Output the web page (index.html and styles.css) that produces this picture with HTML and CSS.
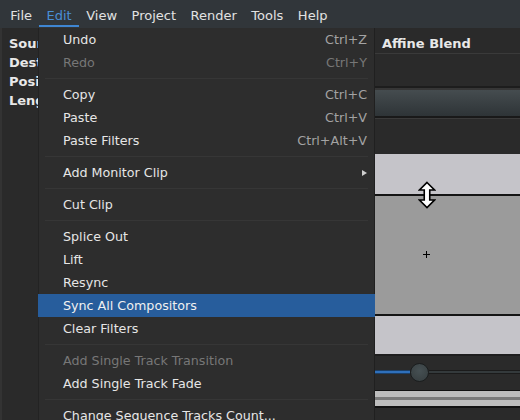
FILE: index.html
```html
<!DOCTYPE html>
<html>
<head>
<meta charset="utf-8">
<link rel="stylesheet" href="styles.css">
</head>
<body>
<div class="app">
  <div class="menubar">
    <span class="mb-item">File</span>
    <span class="mb-item active">Edit</span>
    <span class="mb-item">View</span>
    <span class="mb-item">Project</span>
    <span class="mb-item">Render</span>
    <span class="mb-item">Tools</span>
    <span class="mb-item">Help</span>
  </div>
  <div class="workspace">
    <div class="info">
      <div class="label">Source:</div>
      <div class="label">Destination:</div>
      <div class="label">Position:</div>
      <div class="label">Length:</div>
    </div>
    <div class="editor">
      <div class="title">Affine Blend</div>
      <div class="blank1"></div>
      <div class="toolbar"></div>
      <div class="sepline"></div>
      <div class="blank2"></div>
      <div class="band-light"></div>
      <div class="band-mid"></div>
      <div class="band-light2"></div>
      <div class="slider-row">
        <div class="fill"></div>
        <div class="thumb"></div>
        <div class="track"></div>
      </div>
      <div class="strip"></div>
      <div class="rest"></div>
      <svg class="cursor-resize" width="18" height="28" viewBox="0 0 18 28">
        <polygon points="9,1.5 16.5,9 11.75,9 11.75,19 16.5,19 9,26.5 1.5,19 6.25,19 6.25,9 1.5,9" fill="#ffffff" stroke="#000000" stroke-width="1.6" stroke-linejoin="miter"/>
      </svg>
      <svg class="cursor-cross" width="9" height="9" viewBox="0 0 9 9">
        <path d="M4.5 1V8M1 4.5H8" stroke="#000" stroke-width="1"/>
      </svg>
    </div>
  </div>
  <div class="menu">
    <div class="mi"><span>Undo</span><span class="sc">Ctrl+Z</span></div>
    <div class="mi disabled"><span>Redo</span><span class="sc">Ctrl+Y</span></div>
    <div class="sep"></div>
    <div class="mi"><span>Copy</span><span class="sc">Ctrl+C</span></div>
    <div class="mi"><span>Paste</span><span class="sc">Ctrl+V</span></div>
    <div class="mi"><span>Paste Filters</span><span class="sc">Ctrl+Alt+V</span></div>
    <div class="sep"></div>
    <div class="mi"><span>Add Monitor Clip</span><span class="arrow"></span></div>
    <div class="sep"></div>
    <div class="mi"><span>Cut Clip</span></div>
    <div class="sep"></div>
    <div class="mi"><span>Splice Out</span></div>
    <div class="mi"><span>Lift</span></div>
    <div class="mi"><span>Resync</span></div>
    <div class="mi selected"><span>Sync All Compositors</span></div>
    <div class="mi"><span>Clear Filters</span></div>
    <div class="sep"></div>
    <div class="mi disabled"><span>Add Single Track Transition</span></div>
    <div class="mi"><span>Add Single Track Fade</span></div>
    <div class="sep"></div>
    <div class="mi"><span>Change Sequence Tracks Count...</span></div>
  </div>
</div>
</body>
</html>
```
FILE: styles.css
```css
html, body {
  margin: 0;
  padding: 0;
}
body {
  width: 520px;
  height: 420px;
  overflow: hidden;
  background: #2a2a2a;
  font-family: "DejaVu Sans", "Liberation Sans", sans-serif;
  font-size: 13px;
  color: #e6e6e6;
}
.app {
  position: relative;
  display: flex;
  flex-direction: column;
  height: 420px;
}
.menubar {
  height: 28px;
  flex: none;
  display: flex;
  padding-left: 3px;
  background: #31363a;
}
.mb-item {
  box-sizing: border-box;
  height: 28px;
  padding: 4px 7.25px 0;
  line-height: 24px;
  color: #e2e2e2;
}
.mb-item.active {
  color: #4a8fd6;
  background: linear-gradient(#3f86d2, #3f86d2) no-repeat 0 25px / 100% 2px;
}
.workspace {
  flex: 1;
  display: grid;
  grid-template-columns: 375px 1fr;
  min-height: 0;
}
.info {
  border-left: 2px solid #333333;
  padding: 6px 0 0 7px;
  background: #2a2a2a;
}
.label {
  font-weight: bold;
  line-height: 19px;
  color: #e8e8e8;
  white-space: nowrap;
}
.editor {
  position: relative;
  display: flex;
  flex-direction: column;
  background: #2a2a2a;
  overflow: hidden;
}
.title {
  height: 19px;
  padding: 6px 0 0 7px;
  line-height: 19px;
  font-weight: bold;
  color: #e8e8e8;
  border-bottom: 1px solid #3a3a3a;
  white-space: nowrap;
}
.blank1 {
  height: 32px;
}
.toolbar {
  height: 28px;
  border-top: 2px solid #1d1d1d;
  border-bottom: 2px solid #191919;
  box-shadow: inset 0 2px #363636;
  background: linear-gradient(#474e51, #2e3437);
}
.sepline {
  height: 1px;
  background: #3a3a3a;
}
.blank2 {
  height: 35px;
}
.band-light {
  height: 40px;
  background: #c5c4c9;
  border-bottom: 2px solid #141414;
}
.band-mid {
  height: 118px;
  background: #9b9b9b;
  border-bottom: 2px solid #141414;
}
.band-light2 {
  height: 38px;
  background: #c5c4c9;
  border-bottom: 2px solid #1e1e1e;
}
.slider-row {
  height: 32px;
  padding-bottom: 2px;
  display: flex;
  align-items: center;
}
.fill {
  width: 35px;
  height: 2px;
  background: #2f70bb;
  border-top: 1px solid #1b3f68;
  border-bottom: 1px solid #1b3f68;
}
.thumb {
  box-sizing: border-box;
  width: 19px;
  height: 19px;
  flex: none;
  border-radius: 50%;
  border: 1px solid #1a1d1e;
  background: radial-gradient(circle at 50% 40%, #465053, #353c3e);
}
.track {
  flex: 1;
  height: 2px;
  background: #343a3c;
  border-top: 1px solid #1b1b1b;
  border-bottom: 1px solid #1b1b1b;
}
.strip {
  height: 15px;
  border-top: 1px solid #121212;
  border-bottom: 2px solid #121212;
  background: linear-gradient(#bdbdbd 0 6px, #7a7a7a 6px 9px, #bdbdbd 9px);
}
.rest {
  flex: 1;
}
.cursor-resize {
  position: absolute;
  left: 43px;
  top: 153px;
}
.cursor-cross {
  position: absolute;
  left: 47px;
  top: 222px;
}
.menu {
  position: absolute;
  left: 38px;
  top: 28px;
  bottom: 0;
  width: 337px;
  box-sizing: border-box;
  background: #2d2d2d;
  border-left: 1px solid #232323;
  border-right: 1px solid #202020;
  font-size: 12.7px;
}
.mi {
  height: 23px;
  line-height: 23px;
  display: flex;
  justify-content: space-between;
  align-items: center;
  padding: 0 7px 0 24px;
  color: #e6e6e6;
  white-space: nowrap;
}
.mi .sc {
  color: #a3a3a3;
}
.mi.disabled,
.mi.disabled .sc {
  color: #777777;
}
.mi.selected {
  margin: 0 -1px;
  padding-left: 25px;
  background: #275d9c;
  color: #f0f0f0;
}
.sep {
  height: 1px;
  margin: 4px 6px;
  background: #363636;
}
.arrow {
  width: 0;
  height: 0;
  border-left: 5px solid #cfcfcf;
  border-top: 3.5px solid transparent;
  border-bottom: 3.5px solid transparent;
}
```
